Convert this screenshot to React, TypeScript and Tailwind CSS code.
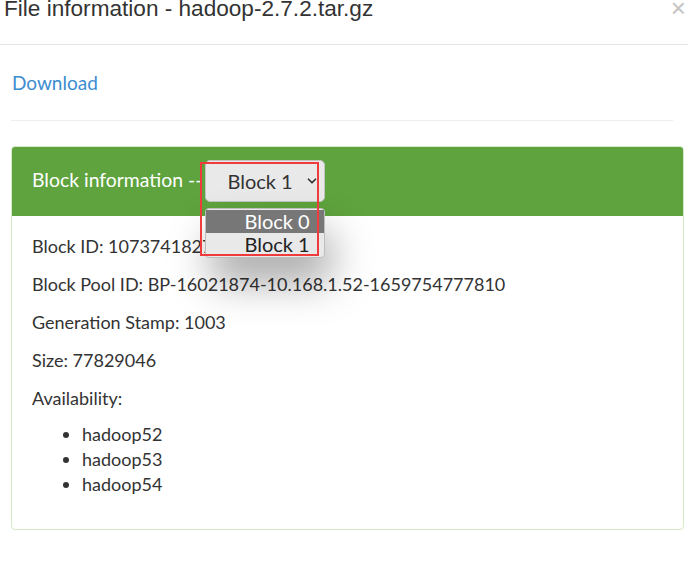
import { ChevronDown } from "lucide-react";

const details = [
  "Block Pool ID: BP-16021874-10.168.1.52-1659754777810",
  "Generation Stamp: 1003",
  "Size: 77829046",
  "Availability:",
];

const hosts = ["hadoop52", "hadoop53", "hadoop54"];

export default function App() {
  return (
    <div className="w-[688px] h-[561px] bg-white overflow-hidden font-['Lato','Noto_Sans',sans-serif] text-[#333]">
      {/* Modal header */}
      <div className="relative flex flex-col h-[45px] border-b border-[#e5e5e5]">
        <h4 className="pl-[4px] -mt-[6px] text-[22.6px] leading-[30px] font-['Liberation_Sans',Arial,sans-serif] text-[#333]">
          File information - hadoop-2.7.2.tar.gz
        </h4>
        <span className="absolute right-[2px] -top-[5px] text-[26px] leading-[26px] text-[#c4c4c4] font-['Liberation_Sans',Arial,sans-serif]">
          ×
        </span>
      </div>

      {/* Modal body */}
      <div className="px-[11px] pt-[26px]">
        <a className="ml-[1px] text-[19px] leading-[24px] text-[#3c8dd0]">Download</a>
        <div className="mt-[24px] border-t border-[#eeeeee] mr-[4px]" />

        <div className="mt-[25px] w-[673px] h-[384px] border border-[#d6e9c6] rounded-[4px]">
          <div className="flex items-center h-[69px] bg-[#5ea33d] rounded-t-[3px] pl-[20px] text-white text-[19.4px]">
            <span className="mt-[-4px]">Block information --</span>
            <div className="relative ml-[3px] -mt-[2px]">
              <div className="flex items-center justify-between w-[120px] h-[42px] bg-[#e9e9e9] border border-[#c4c4c4] rounded-[5px] pl-[21px] pr-[5px] text-[#333] text-[20px]">
                <span>Block 1</span>
                <ChevronDown size={14} strokeWidth={3} className="text-[#333]" />
              </div>
              {/* open option list */}
              <div className="absolute left-0 top-[48px] w-[120px] bg-[#e9e9e9] border border-[#bdbdbd] rounded-[4px] py-[1px] text-[20px] leading-[23px] shadow-[6px_24px_40px_rgba(0,0,0,0.35)] z-10">
                <div className="bg-[#777777] text-white pl-[38px]">Block 0</div>
                <div className="text-[#222] pl-[38px]">Block 1</div>
              </div>
              {/* highlight box */}
              <div className="absolute -left-[5px] top-[2px] w-[119px] h-[94px] border-2 border-[#ef3b3b] z-20" />
            </div>
          </div>

          <div className="pl-[20px] pt-[17px] text-[18px] leading-[26px]">
            <p>Block ID: 1073741827</p>
            {details.map((d) => (
              <p key={d} className="mt-[12px]">
                {d}
              </p>
            ))}
            <ul className="mt-[11px] pl-[50px] list-disc leading-[25px]">
              {hosts.map((h) => (
                <li key={h}>{h}</li>
              ))}
            </ul>
          </div>
        </div>
      </div>
    </div>
  );
}
